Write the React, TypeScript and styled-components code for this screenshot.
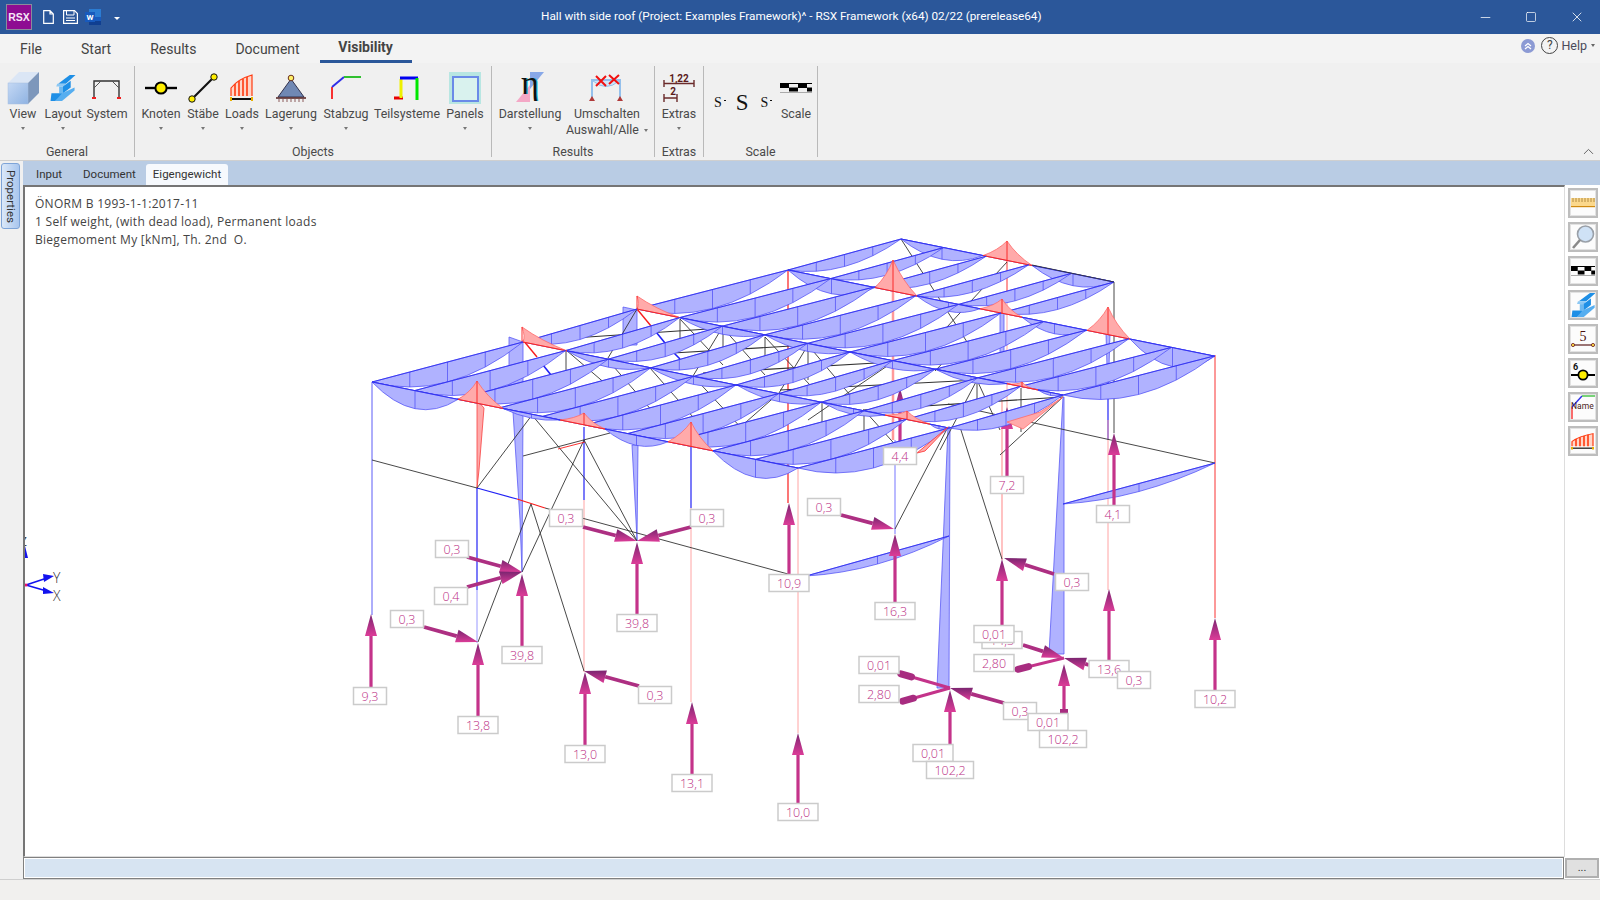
import React from "react";
import styled, { createGlobalStyle } from "styled-components";
import { FiMinus, FiSquare, FiX, FiChevronUp } from "react-icons/fi";

const UI_FONT = `Roboto, "Open Sans", "Liberation Sans", sans-serif`;
const CHART_FONT = `"Open Sans", "Noto Sans", "Liberation Sans", sans-serif`;

const GlobalStyle = createGlobalStyle`
  html, body { margin: 0; padding: 0; background: #f1f0ee; }
  body { font-family: ${UI_FONT}; color: #444; overflow: hidden; }
`;

/* ---------- geometry of the structure, in page pixels ---------- */

interface Pt {
  x: number;
  y: number;
}

const rows: Pt[] = [
  { x: 372, y: 382 },
  { x: 523, y: 342 },
  { x: 637, y: 309 },
  { x: 788, y: 270 },
  { x: 901, y: 239 },
];
const STEP_X = 42.6;
const STEP_Y = 8.6;
const node = (r: number, u: number): Pt => ({ x: rows[r].x + STEP_X * u, y: rows[r].y + STEP_Y * u });
const chordY = (r: number, x: number) => rows[r].y + ((x - rows[r].x) * STEP_Y) / STEP_X;

type Sag = [number, number, number];
type Hog = [number, number, number, number];

const frames: { row: number; end: number; sags: Sag[]; hogs: Hog[] }[] = [
  {
    row: 4,
    end: 1114,
    sags: [[901, 983, 12], [1032, 1114, 12]],
    hogs: [[983, 1032, 1007, 241]],
  },
  {
    row: 3,
    end: 1215,
    sags: [[788, 875, 15], [917, 980, 9], [1022, 1087, 10], [1130, 1215, 19]],
    hogs: [[875, 917, 893, 260], [980, 1022, 1002, 299], [1087, 1130, 1108, 307]],
  },
  {
    row: 2,
    end: 1063,
    sags: [[680, 765, 8], [765, 850, 8], [850, 935, 8], [935, 1007, 6], [1038, 1063, 3]],
    hogs: [[637, 680, 637, 296], [1007, 1038, 1022, 382]],
  },
  {
    row: 1,
    end: 948,
    sags: [[567, 650, 8], [650, 737, 8], [737, 822, 8], [822, 885, 6], [930, 948, 3]],
    hogs: [[523, 567, 522, 327], [885, 930, 907, 411]],
  },
  {
    row: 0,
    end: 798,
    sags: [[372, 458, 18], [503, 560, 4], [605, 668, 10], [713, 798, 18]],
    hogs: [[458, 503, 477, 381], [560, 605, 584, 413], [668, 713, 691, 422]],
  },
];

const spans: { from: number; to: number; count: number; depth: number }[] = [
  { from: 3, to: 4, count: 6, depth: 12 },
  { from: 2, to: 3, count: 11, depth: 19 },
  { from: 1, to: 2, count: 11, depth: 14 },
  { from: 0, to: 1, count: 11, depth: 20 },
];

// [x1, y1, x2, y2, colour, width]
type Seg = [number, number, number, number, string, number?];
const BLUE = "#2222f5";
const PALE = "#8c8cff";
const RED = "#f81c1c";
const PINK = "#ff9a9a";
const INK = "#333";

const columns: Seg[] = [
  [372, 382, 372, 615, "#4a4af5"],
  [477, 488, 477, 590, BLUE, 1.2],
  [477, 590, 477, 643, PALE],
  [584, 427, 584, 500, BLUE, 1.2],
  [584, 500, 584, 672, PINK],
  [691, 447, 691, 508, BLUE, 1.2],
  [691, 508, 691, 702, PINK],
  [788, 270, 788, 503, RED, 1.2],
  [798, 468, 798, 733, PINK],
  [893, 262, 893, 440, PINK, 2.5],
  [895, 440, 895, 534, PALE, 1.2],
  [1007, 243, 1007, 300, RED],
  [1007, 300, 1007, 480, PINK],
  [1002, 313, 1002, 360, BLUE, 1.4],
  [1002, 400, 1002, 560, PINK, 1.2],
  [1108, 333, 1108, 440, BLUE, 1.2],
  [1108, 420, 1108, 590, PINK],
  [1114, 282, 1114, 433, INK],
  [1215, 355, 1215, 618, RED],
];

const braces: Seg[] = [
  [372, 460, 477, 488, INK],
  [477, 488, 517, 499, BLUE, 1.2],
  [517, 499, 545, 508, RED, 1.2],
  [545, 508, 788, 574, INK],
  [948, 404, 1215, 463, INK],
  [477, 488, 532, 415, INK],
  [522, 572, 584, 440, INK],
  [532, 415, 637, 541, INK],
  [523, 456, 610, 433, INK],
  [558, 449, 585, 442, RED],
  [584, 440, 637, 541, INK],
  [531, 504, 584, 671, INK],
  [531, 504, 478, 642, INK],
  [895, 529, 948, 427, INK],
  [960, 427, 1002, 559, INK],
  // under the roof
  [543, 340, 723, 328, INK, 1.1],
  [673, 353, 808, 345, INK, 1.1],
  [703, 373, 893, 362, INK, 1.1],
  [780, 390, 978, 380, INK, 1.1],
  [863, 410, 1063, 397, INK, 1.1],
  [566, 350, 607, 385, INK],
  [680, 319, 723, 365, INK],
  [723, 328, 765, 375, INK],
  [765, 337, 810, 385, INK],
  [607, 359, 660, 420, INK],
  [650, 368, 700, 425, INK],
  [693, 376, 745, 432, INK],
  [808, 345, 850, 395, INK],
  [637, 309, 608, 358, INK],
  [693, 376, 722, 328, INK],
  [779, 393, 808, 345, INK],
  [737, 430, 779, 393, INK],
  [808, 420, 893, 362, INK],
  [780, 450, 864, 410, INK],
  [864, 410, 900, 450, INK],
  [901, 239, 985, 370, INK],
  [1007, 262, 935, 340, INK],
  [935, 371, 960, 345, INK],
  [1063, 397, 1000, 455, INK],
  [1021, 388, 1021, 432, INK],
  [977, 380, 1000, 430, INK],
  [977, 380, 940, 450, INK],
  [566, 350, 566, 372, INK],
  [680, 319, 680, 342, INK],
  [723, 328, 723, 350, INK],
  [765, 337, 765, 360, INK],
  [808, 345, 808, 380, INK],
  [822, 402, 822, 430, INK],
  [864, 410, 864, 435, INK],
  [977, 380, 977, 400, INK],
  // short blue struts seen through the gaps
  [543, 365, 551, 375, BLUE, 1.6],
  [656, 332, 665, 343, BLUE, 1.6],
  [673, 352, 680, 359, BLUE, 1.6],
  [523, 340, 537, 357, RED, 1.4],
  [637, 309, 651, 326, RED, 1.4],
];

// wedges of the column moment diagram
const wedges: string[] = [
  "513,412 523,412 522,572 520,520",
  "632,445 638,445 637,541 636,520",
  "948,427 950,427 949,688 937,688",
  "1063,397 1064,397 1064,654 1049,654",
  "509,337 523,342 523,400 509,400",
  "623,307 637,310 637,345 623,345",
  "1106,333 1110,333 1108,400",
  "1000,310 1004,310 1004,360 1000,360",
];

// lower beams of the side roof
const lowerBeams: [Pt, Pt, number][] = [
  [{ x: 806, y: 576 }, { x: 949, y: 536 }, 8],
  [{ x: 1063, y: 504 }, { x: 1215, y: 463 }, 8],
];

// [tail x, tail y, tip x, tip y]
type Arrow = [number, number, number, number];
const hiddenArrows: Arrow[] = [
  [900, 445, 900, 388],
  [1007, 476, 1007, 407],
];
const arrows: Arrow[] = [
  [371, 687, 371, 614],
  [478, 716, 478, 643],
  [522, 646, 522, 574],
  [637, 615, 637, 542],
  [585, 745, 585, 672],
  [692, 774, 692, 702],
  [798, 803, 798, 733],
  [789, 574, 789, 503],
  [895, 603, 895, 534],
  [1114, 505, 1114, 433],
  [1002, 626, 1002, 559],
  [1109, 661, 1109, 589],
  [1215, 690, 1215, 618],
  [950, 745, 950, 690],
  [1064, 710, 1064, 664],
  [424, 627, 478, 642],
  [467, 557, 522, 572],
  [467, 587, 522, 572],
  [583, 527, 637, 541],
  [691, 527, 637, 541],
  [639, 686, 584, 671],
  [841, 515, 894, 529],
  [1054, 574, 1004, 558],
  [1004, 703, 950, 688],
  [1023, 645, 1064, 658],
  [1089, 665, 1064, 658],
];
// short fat heads of the small reactions, [from x, from y, to x, to y]
const stubs: Arrow[] = [
  [950, 688, 898, 673],
  [950, 688, 900, 702],
  [1064, 658, 1015, 670],
];

const labels: [string, number, number][] = [
  ["9,3", 370, 696],
  ["13,8", 478, 725],
  ["39,8", 522, 655],
  ["0,3", 407, 619],
  ["0,3", 452, 549],
  ["0,4", 451, 596],
  ["0,3", 566, 518],
  ["0,3", 707, 518],
  ["39,8", 637, 623],
  ["0,3", 655, 695],
  ["13,0", 585, 754],
  ["13,1", 692, 783],
  ["10,0", 798, 812],
  ["10,9", 789, 583],
  ["0,3", 824, 507],
  ["16,3", 895, 611],
  ["4,4", 900, 456],
  ["7,2", 1007, 485],
  ["4,1", 1113, 514],
  ["0,3", 1072, 582],
  ["10,2", 1215, 699],
  ["14,3", 1002, 640],
  ["0,01", 994, 634],
  ["2,80", 994, 663],
  ["13,6", 1109, 669],
  ["0,3", 1134, 680],
  ["0,01", 879, 665],
  ["2,80", 879, 694],
  ["0,3", 1020, 711],
  ["0,01", 1048, 722],
  ["102,2", 1063, 739],
  ["0,01", 933, 753],
  ["102,2", 950, 770],
];

/* ---------- drawing helpers ---------- */

const LENS_FILL = "#b0b2ff";
const LENS_LINE = "#4848f5";

const Lens = ({ a, b, depth, ticks = 3 }: { a: Pt; b: Pt; depth: number; ticks?: number }) => {
  const cx = (a.x + b.x) / 2;
  const cy = (a.y + b.y) / 2 + depth * 2;
  const marks = Array.from({ length: ticks }, (_, i) => (i + 1) / (ticks + 1));
  return (
    <g>
      <path d={`M${a.x} ${a.y} Q${cx} ${cy} ${b.x} ${b.y} Z`} fill={LENS_FILL} stroke={LENS_LINE} strokeWidth={0.7} />
      {marks.map((t) => {
        const x = a.x + (b.x - a.x) * t;
        const y = a.y + (b.y - a.y) * t;
        return <line key={t} x1={x} y1={y} x2={x} y2={y + 4 * depth * t * (1 - t)} stroke={LENS_LINE} strokeWidth={0.7} />;
      })}
      <line x1={a.x} y1={a.y} x2={b.x} y2={b.y} stroke="#2a2af0" strokeWidth={0.8} />
    </g>
  );
};

const Frame = ({ row, end, sags, hogs }: (typeof frames)[number]) => (
  <g>
    <line x1={rows[row].x} y1={rows[row].y} x2={end} y2={chordY(row, end)} stroke="#1c1cee" strokeWidth={0.9} />
    {sags.map(([x1, x2, depth]) => (
      <Lens key={x1} a={{ x: x1, y: chordY(row, x1) }} b={{ x: x2, y: chordY(row, x2) }} depth={depth} ticks={1} />
    ))}
    {hogs.map(([x1, x2, ax, ay]) => {
      const y1 = chordY(row, x1);
      const y2 = chordY(row, x2);
      const c1x = (x1 + ax) / 2 + 3;
      const c1y = (y1 + ay) / 2 + 2;
      const c2x = (x2 + ax) / 2 - 3;
      const c2y = (y2 + ay) / 2 + 2;
      return (
        <g key={x1}>
          <path
            d={`M${x1} ${y1} Q${c1x} ${c1y} ${ax} ${ay} Q${c2x} ${c2y} ${x2} ${y2} Z`}
            fill="#ffaaaa"
            stroke="#ff6a6a"
            strokeWidth={0.8}
          />
          <line x1={ax} y1={ay} x2={ax} y2={chordY(row, ax)} stroke={RED} strokeWidth={0.9} />
          <line x1={x1} y1={y1} x2={x2} y2={y2} stroke={RED} strokeWidth={0.9} />
        </g>
      );
    })}
  </g>
);

const Arrowhead = ({ a }: { a: Arrow }) => {
  const [x1, y1, x2, y2] = a;
  const len = Math.hypot(x2 - x1, y2 - y1);
  const ux = (x2 - x1) / len;
  const uy = (y2 - y1) / len;
  const hx = x2 - ux * 22;
  const hy = y2 - uy * 22;
  const slanted = x1 !== x2;
  const wx = -uy * (slanted ? 6.5 : 6);
  const wy = ux * (slanted ? 6.5 : 6);
  return (
    <g>
      <line
        x1={x1}
        y1={y1}
        x2={hx}
        y2={hy}
        stroke={slanted ? "#ad2f82" : "#c4338a"}
        strokeWidth={slanted ? 3.8 : 3.2}
      />
      <polygon points={`${x2},${y2} ${hx + wx},${hy + wy} ${hx - wx},${hy - wy}`} fill="url(#arrowShade)" />
    </g>
  );
};

const Stub = ({ a }: { a: Arrow }) => {
  const [x1, y1, x2, y2] = a;
  const len = Math.hypot(x2 - x1, y2 - y1);
  const ux = (x2 - x1) / len;
  const uy = (y2 - y1) / len;
  return (
    <g>
      <line x1={x1} y1={y1} x2={x2} y2={y2} stroke="#c4338a" strokeWidth={3} />
      <line
        x1={x2 - ux * 14}
        y1={y2 - uy * 14}
        x2={x2 - ux * 3}
        y2={y2 - uy * 3}
        stroke="#a82c80"
        strokeWidth={7}
        strokeLinecap="round"
      />
    </g>
  );
};

const Segs = ({ items }: { items: Seg[] }) => (
  <>
    {items.map(([x1, y1, x2, y2, color, w], i) => (
      <line key={i} x1={x1} y1={y1} x2={x2} y2={y2} stroke={color} strokeWidth={w ?? 0.9} />
    ))}
  </>
);

const ValueLabel = ({ text, x, y }: { text: string; x: number; y: number }) => {
  const w = 12 + text.length * 7;
  return (
    <g>
      <rect x={x - w / 2} y={y - 8.5} width={w} height={17} fill="#fff" stroke="#cbcbcb" strokeWidth={1.5} />
      <LabelText x={x} y={y + 4.5}>
        {text}
      </LabelText>
    </g>
  );
};

const Structure = () => (
  <CanvasSvg viewBox="25 187 1540 670">
    <defs>
      <linearGradient id="arrowShade" x1="0" y1="0" x2="0" y2="1">
        <stop offset="0" stopColor="#7a2570" />
        <stop offset="1" stopColor="#dc3c98" />
      </linearGradient>
    </defs>

    {/* axis cross in the corner */}
    <g>
      <text x="20" y="546" fontSize="12" fill="#444" fontFamily={CHART_FONT}>Z</text>
      <polygon points="25,546 28,558 25,558" fill="#1212ee" />
      <line x1="26" y1="585" x2="50" y2="577" stroke="#1212ee" strokeWidth="1.4" />
      <line x1="26" y1="585" x2="50" y2="592" stroke="#1212ee" strokeWidth="1.4" />
      <polygon points="54,576 43,574 44,582" fill="#1212ee" />
      <polygon points="54,593 43,587 43,594" fill="#1212ee" />
      <circle cx="26" cy="585" r="1.6" fill="#e8106c" />
      <AxisText x="53" y="583">Y</AxisText>
      <AxisText x="53" y="601">X</AxisText>
    </g>

    <Segs items={columns} />
    {wedges.map((points) => (
      <polygon key={points} points={points} fill={LENS_FILL} stroke="#5a5af5" strokeWidth={0.8} />
    ))}
    <polygon points="477,400 484,408 479,470 477,488" fill="#ffaaaa" stroke="#f84040" strokeWidth="0.8" />
    <Segs items={braces} />
    {lowerBeams.map(([a, b, depth]) => (
      <Lens key={a.x} a={a} b={b} depth={depth} ticks={1} />
    ))}
    {hiddenArrows.map((a) => (
      <Arrowhead key={a[3]} a={a} />
    ))}

    {spans.map(({ from, to, count, depth }) => (
      <g key={from}>
        {from === 3 && <Frame {...frames[0]} />}
        {Array.from({ length: count }, (_, u) => (
          <Lens key={u} a={node(from, u)} b={node(to, u)} depth={depth} />
        ))}
        <Frame {...frames.find((f) => f.row === from)!} />
      </g>
    ))}
    <line x1="1032" y1="265" x2="1114" y2="282" stroke={INK} strokeWidth="0.9" />
    <polygon points="1007,422 1023,429 1063,397 1040,412" fill="#ffaaaa" stroke="#ff6a6a" strokeWidth="0.8" />
    <polygon points="917,453 925,451 948,427" fill="#ffaaaa" stroke="#ff4040" strokeWidth="0.9" />

    {arrows.map((a, i) => (
      <Arrowhead key={i} a={a} />
    ))}
    {stubs.map((a) => (
      <Stub key={a[2]} a={a} />
    ))}
    <rect x="1060" y="709" width="8" height="5" fill="#a82c80" />
    {labels.map(([text, x, y], i) => (
      <ValueLabel key={i} text={text} x={x} y={y} />
    ))}
  </CanvasSvg>
);

/* ---------- icons ---------- */

const ViewIcon = () => (
  <svg width="33" height="34" viewBox="0 0 33 34">
    <defs>
      <linearGradient id="boxFront" x1="0" y1="0" x2="1" y2="1">
        <stop offset="0" stopColor="#c4d8f4" />
        <stop offset="1" stopColor="#8fb3e2" />
      </linearGradient>
    </defs>
    <polygon points="1,12 12,1 32,1 21,12" fill="#dbe6f5" />
    <polygon points="21,12 32,1 32,22 21,33" fill="#7d97bb" />
    <rect x="1" y="12" width="20" height="21" fill="url(#boxFront)" stroke="#a8bfdf" strokeWidth="0.5" />
  </svg>
);

const BeamIcon = ({ size = 26 }: { size?: number }) => (
  <svg width={size} height={size} viewBox="0 0 26 27">
    <polygon points="8,9 20,0 26,0 16,9" fill="#1e8fe6" />
    <polygon points="7,9 16,9 14,12 6,12" fill="#8cc8f4" />
    <polygon points="9,12 13,12 13,19 9,19" fill="#6cb8f0" />
    <polygon points="13,12 21,6 21,13 13,19" fill="#1e8fe6" />
    <polygon points="1,19 12,19 12,21 5,27 0,27" fill="#1e8fe6" />
    <polygon points="12,19 25,13 25,16 12,27 5,27" fill="#56aef0" />
  </svg>
);

const SystemIcon = () => (
  <svg width="30" height="22" viewBox="0 0 30 22">
    <path d="M2 20 V4 H27 V20" fill="none" stroke="#333" strokeWidth="1.4" />
    <path d="M2 11 L9 4 M27 11 L20 4" fill="none" stroke="#555" strokeWidth="1" />
    <path d="M0 21 H4 M25 21 H29" stroke="#f02020" strokeWidth="2" />
  </svg>
);

const NodeIcon = () => (
  <svg width="32" height="14" viewBox="0 0 32 14">
    <line x1="0" y1="7" x2="32" y2="7" stroke="#000" strokeWidth="2.4" />
    <circle cx="16" cy="7" r="5.6" fill="#ffee00" stroke="#000" strokeWidth="2" />
  </svg>
);

const MemberIcon = () => (
  <svg width="32" height="32" viewBox="0 0 32 32">
    <line x1="5" y1="27" x2="27" y2="5" stroke="#111" strokeWidth="2.2" />
    <circle cx="5" cy="27" r="3.2" fill="#ffee00" stroke="#111" strokeWidth="1" />
    <circle cx="27" cy="5" r="3.2" fill="#ffee00" stroke="#111" strokeWidth="1" />
  </svg>
);

const LoadIcon = ({ width = 24, height = 28 }: { width?: number; height?: number }) => (
  <svg width={width} height={height} viewBox="0 0 24 28" preserveAspectRatio="none">
    <path d="M1 22 V14 Q8 5 22 1 V22" fill="#ffd6c8" stroke="#ff3a10" strokeWidth="1.2" />
    <path d="M5 22 V10 M9 22 V7 M13 22 V5 M17 22 V3" stroke="#ff3a10" strokeWidth="1.6" />
    <line x1="0" y1="25" x2="23" y2="25" stroke="#111" strokeWidth="2" />
    <path d="M1 23 V27 M22 23 V27" stroke="#e8b000" strokeWidth="2" />
  </svg>
);

const SupportIcon = () => (
  <svg width="30" height="28" viewBox="0 0 30 28">
    <polygon points="15,5 28,23 2,23" fill="#7088b4" stroke="#33334e" strokeWidth="1" />
    <circle cx="15" cy="4" r="2.8" fill="#ffee66" stroke="#6a3020" strokeWidth="1" />
    <line x1="0" y1="24" x2="30" y2="24" stroke="#5a2a2a" strokeWidth="1.6" />
    <path d="M3 25 V28 M7 25 V28 M11 25 V28 M15 25 V28 M19 25 V28 M23 25 V28 M27 25 V28" stroke="#8a5a5a" strokeWidth="1" />
  </svg>
);

const PolylineIcon = () => (
  <svg width="32" height="26" viewBox="0 0 32 26">
    <path d="M2 24 V12" stroke="#f83030" strokeWidth="2" fill="none" />
    <path d="M2 12 L14 2" stroke="#3030e8" strokeWidth="2" fill="none" />
    <path d="M14 2 H31" stroke="#30c030" strokeWidth="2" fill="none" />
  </svg>
);

const SubsystemIcon = () => (
  <svg width="26" height="24" viewBox="0 0 26 24">
    <path d="M0 22 H9" stroke="#e80000" strokeWidth="3" />
    <path d="M7 22 V3" stroke="#eef000" strokeWidth="3" />
    <path d="M6 2 H24" stroke="#0000f0" strokeWidth="3" />
    <path d="M23 2 V24" stroke="#00e800" strokeWidth="3" />
  </svg>
);

const PanelIcon = () => (
  <svg width="32" height="32" viewBox="0 0 32 32">
    <rect width="32" height="32" fill="#b8e6e2" />
    <rect x="4" y="5" width="25" height="24" fill="#d9f2ee" stroke="#6a8ae8" strokeWidth="2" />
  </svg>
);

const DisplayIcon = () => (
  <svg width="30" height="32" viewBox="0 0 30 32" overflow="visible">
    <polygon points="1,30 15,13 15,30" fill="#f4a8c6" />
    <polygon points="15,0 29,0 15,17" fill="#88a8e8" />
    <text x="16" y="22" textAnchor="middle" fontSize="34" fontFamily="Liberation Serif, serif" fill="#20b8c0">η</text>
    <text x="15" y="22" textAnchor="middle" fontSize="34" fontFamily="Liberation Serif, serif" fill="#111">η</text>
  </svg>
);

const ToggleIcon = () => (
  <svg width="34" height="28" viewBox="0 0 34 28" overflow="visible">
    <path d="M2 26 V6 H30 V26" fill="none" stroke="#94c0ec" strokeWidth="2" />
    <path d="M3 7 Q16 18 29 7" fill="#d0e4f8" stroke="#94c0ec" strokeWidth="1" />
    <polygon points="2,22 5,27 -1,27" fill="#b03a3a" />
    <polygon points="30,22 33,27 27,27" fill="#b03a3a" />
    <path d="M6 2 L16 12 M16 2 L6 12 M19 1 L29 10 M29 1 L19 10" stroke="#f01010" strokeWidth="2" />
  </svg>
);

const ExtrasIcon = () => (
  <svg width="32" height="30" viewBox="0 0 32 30" overflow="visible">
    <IconText x="16" y="9" fontSize="10" fontWeight="700">1,22</IconText>
    <path d="M1 10.5 H31 M1 7 V14 M31 7 V14" stroke="#6a2a2a" strokeWidth="1.4" fill="none" />
    <IconText x="10" y="22" fontSize="10" fontWeight="700">2</IconText>
    <path d="M1 25 H14 M1 21 V29 M14 21 V29" stroke="#6a2a2a" strokeWidth="1.4" fill="none" />
  </svg>
);

const CheckerIcon = ({ width = 32 }: { width?: number }) => (
  <svg width={width} height="10" viewBox="0 0 32 10" preserveAspectRatio="none">
    <rect width="32" height="1" fill="#000" />
    <rect x="0" y="1" width="9" height="4" fill="#000" />
    <rect x="18" y="1" width="9" height="4" fill="#000" />
    <rect x="9" y="4.5" width="9" height="4" fill="#000" />
    <rect x="27" y="4.5" width="5" height="4" fill="#000" />
    <rect y="9" width="32" height="1" fill="#aaa" />
  </svg>
);

const RulerIcon = () => (
  <svg width="24" height="10" viewBox="0 0 24 10">
    <rect width="24" height="8" fill="#fbd88c" />
    <path d="M2 0 V4 M5 0 V4 M8 0 V4 M11 0 V4 M14 0 V4 M17 0 V4 M20 0 V4 M23 0 V4" stroke="#a07a30" strokeWidth="0.8" />
    <rect y="8" width="24" height="1.2" fill="#d08a10" />
  </svg>
);

const MagnifierIcon = () => (
  <svg width="24" height="24" viewBox="0 0 24 24">
    <circle cx="14.5" cy="9" r="8" fill="#cfe2f6" stroke="#9aa0a8" strokeWidth="1.6" />
    <line x1="9" y1="15" x2="2" y2="23" stroke="#8a8a8a" strokeWidth="2.6" />
  </svg>
);

const DimensionIcon = () => (
  <svg width="24" height="20" viewBox="0 0 24 20" overflow="visible">
    <text x="12" y="12" textAnchor="middle" fontSize="14" fontFamily="Liberation Serif, serif" fill="#4a1010">5</text>
    <line x1="2" y1="16" x2="22" y2="16" stroke="#5a1a1a" strokeWidth="1.2" />
    <circle cx="2" cy="16" r="1.6" fill="#ffdd44" stroke="#6a1a1a" strokeWidth="0.8" />
    <circle cx="22" cy="16" r="1.6" fill="#ffdd44" stroke="#6a1a1a" strokeWidth="0.8" />
  </svg>
);

const NodeNumberIcon = () => (
  <svg width="24" height="22" viewBox="0 0 24 22">
    <text x="2" y="8" fontSize="9" fontWeight="700" fontFamily={UI_FONT} fill="#111">6</text>
    <line x1="0" y1="13" x2="24" y2="13" stroke="#000" strokeWidth="2" />
    <circle cx="12" cy="13" r="4.6" fill="#ffee00" stroke="#000" strokeWidth="1.8" />
  </svg>
);

const MemberNameIcon = () => (
  <svg width="24" height="26" viewBox="0 0 24 26" overflow="visible">
    <path d="M1 25 V13" stroke="#f83030" strokeWidth="1.4" fill="none" />
    <path d="M1 13 L11 2" stroke="#3030e8" strokeWidth="1.4" fill="none" />
    <path d="M11 2 H24" stroke="#40c040" strokeWidth="1.4" fill="none" />
    <text x="0" y="15" fontSize="8.5" fontFamily={UI_FONT} fill="#4a1a1a">Name</text>
  </svg>
);

const DocIcon = () => (
  <svg width="11" height="14" viewBox="0 0 11 14">
    <path d="M.7.7 H7 L10.3 4 V13.3 H.7 Z M7 .7 V4 H10.3" fill="none" stroke="#fff" strokeWidth="1.2" />
  </svg>
);

const SaveIcon = () => (
  <svg width="15" height="14" viewBox="0 0 15 14">
    <path d="M.6.6 H11.5 L14.4 3.5 V13.4 H.6 Z" fill="none" stroke="#fff" strokeWidth="1.2" />
    <path d="M3.5.6 V5 H11 V.6 M3 8 H12 M3 10.5 H12" fill="none" stroke="#fff" strokeWidth="1" />
  </svg>
);

const WordIcon = () => (
  <svg width="16" height="16" viewBox="0 0 16 16">
    <rect x="4" y="0" width="12" height="16" fill="#2b7cd3" />
    <rect x="4" y="8" width="12" height="4" fill="#185abd" />
    <rect x="4" y="12" width="12" height="4" fill="#103f91" />
    <rect x="0" y="3" width="10" height="10" fill="#185abd" />
    <text x="5" y="11" textAnchor="middle" fontSize="8" fontWeight="700" fontFamily={UI_FONT} fill="#fff">W</text>
  </svg>
);

/* ---------- ribbon content ---------- */

interface ToolDef {
  label: string;
  width: number;
  caret?: boolean;
  icon: React.ReactNode;
}

const generalTools: ToolDef[] = [
  { label: "View", width: 40, caret: true, icon: <ViewIcon /> },
  { label: "Layout", width: 40, caret: true, icon: <BeamIcon /> },
  { label: "System", width: 48, icon: <SystemIcon /> },
];
const objectTools: ToolDef[] = [
  { label: "Knoten", width: 40, caret: true, icon: <NodeIcon /> },
  { label: "Stäbe", width: 44, caret: true, icon: <MemberIcon /> },
  { label: "Loads", width: 34, caret: true, icon: <LoadIcon /> },
  { label: "Lagerung", width: 64, caret: true, icon: <SupportIcon /> },
  { label: "Stabzug", width: 46, caret: true, icon: <PolylineIcon /> },
  { label: "Teilsysteme", width: 76, icon: <SubsystemIcon /> },
  { label: "Panels", width: 40, caret: true, icon: <PanelIcon /> },
];

const sideTools: React.ReactNode[] = [
  <RulerIcon />,
  <MagnifierIcon />,
  <CheckerIcon width={24} />,
  <BeamIcon size={25} />,
  <DimensionIcon />,
  <NodeNumberIcon />,
  <MemberNameIcon />,
  <LoadIcon width={24} height={17} />,
];

const Tool = ({ label, width, caret, icon }: ToolDef) => (
  <ToolButton $width={width}>
    <ToolIcon>{icon}</ToolIcon>
    <ToolLabel>{label}</ToolLabel>
    {caret && <Caret />}
  </ToolButton>
);

const App = () => (
  <Page>
    <GlobalStyle />
    <TitleBar>
      <QuickAccess>
        <Logo>RSX</Logo>
        <QuickIcon $left={11}><DocIcon /></QuickIcon>
        <QuickIcon $left={9}><SaveIcon /></QuickIcon>
        <QuickIcon $left={7}><WordIcon /></QuickIcon>
        <QuickCaret />
      </QuickAccess>
      <WindowTitle>Hall with side roof (Project: Examples Framework)^ - RSX Framework (x64) 02/22 (prerelease64)</WindowTitle>
      <WindowControls>
        <WindowButton><FiMinus size={15} strokeWidth={1.2} /></WindowButton>
        <WindowButton><FiSquare size={12} strokeWidth={1.4} /></WindowButton>
        <WindowButton><FiX size={16} strokeWidth={1.2} /></WindowButton>
      </WindowControls>
    </TitleBar>

    <MenuRow>
      <MenuItem $left={20}>File</MenuItem>
      <MenuItem $left={39}>Start</MenuItem>
      <MenuItem $left={39}>Results</MenuItem>
      <MenuItem $left={39}>Document</MenuItem>
      <ActiveMenu>Visibility</ActiveMenu>
      <HelpArea>
        <HelpBadge>
          <svg width="14" height="14" viewBox="0 0 14 14">
            <path d="M4 7 L7 4.5 L10 7 M4 10 L7 7.5 L10 10" fill="none" stroke="#fff" strokeWidth="1.3" />
          </svg>
        </HelpBadge>
        <HelpCircle>?</HelpCircle>
        <HelpText>Help</HelpText>
        <HelpCaret />
      </HelpArea>
    </MenuRow>

    <Ribbon>
      <Group $width={135}>
        <Tools $pad={3}>{generalTools.map((t) => <Tool key={t.label} {...t} />)}</Tools>
        <GroupName>General</GroupName>
      </Group>
      <Group $width={357}>
        <Tools $pad={6}>{objectTools.map((t) => <Tool key={t.label} {...t} />)}</Tools>
        <GroupName>Objects</GroupName>
      </Group>
      <Group $width={163}>
        <Tools $pad={5}>
          <Tool label="Darstellung" width={66} caret icon={<DisplayIcon />} />
          <ToolButton $width={88}>
            <ToolIcon><ToggleIcon /></ToolIcon>
            <ToolLabel>Umschalten</ToolLabel>
            <ToolLabel>Auswahl/Alle <InlineCaret /></ToolLabel>
          </ToolButton>
        </Tools>
        <GroupName>Results</GroupName>
      </Group>
      <Group $width={49}>
        <Tools $pad={0}>
          <Tool label="Extras" width={48} caret icon={<ExtrasIcon />} />
        </Tools>
        <GroupName>Extras</GroupName>
      </Group>
      <Group $width={114}>
        <Tools $pad={10}>
          <ScaleGlyphs>
            <SmallS>S</SmallS>
            <BigS>S</BigS>
            <SmallS>S</SmallS>
          </ScaleGlyphs>
          <Tool label="Scale" width={36} icon={<CheckerIcon />} />
        </Tools>
        <GroupName>Scale</GroupName>
      </Group>
      <CollapseButton><FiChevronUp size={17} strokeWidth={1.4} /></CollapseButton>
    </Ribbon>

    <Workspace>
      <SideStrip>
        <PropertiesTab>Properties</PropertiesTab>
      </SideStrip>
      <WorkColumn>
        <DocTabs>
          <DocTab>Input</DocTab>
          <DocTab>Document</DocTab>
          <DocTab $active>Eigengewicht</DocTab>
        </DocTabs>
        <Body>
          <Canvas>
            <Structure />
            <Note>ÖNORM B 1993-1-1:2017-11</Note>
            <Note>1 Self weight, (with dead load), Permanent loads</Note>
            <Note>Biegemoment My [kNm], Th. 2nd&nbsp; O.</Note>
          </Canvas>
          <SideTools>
            {sideTools.map((icon, i) => (
              <SideButton key={i}>{icon}</SideButton>
            ))}
          </SideTools>
        </Body>
        <BottomRow>
          <InputBar />
          <MoreButton>...</MoreButton>
        </BottomRow>
      </WorkColumn>
    </Workspace>
    <StatusBar />
  </Page>
);

/* ---------- styles ---------- */

const Page = styled.div`
  width: 1600px;
  height: 900px;
  display: flex;
  flex-direction: column;
  background: #f0f0f0;
  overflow: hidden;
`;

const TitleBar = styled.header`
  height: 34px;
  flex: none;
  display: flex;
  align-items: center;
  position: relative;
  background: #2b579a;
  color: #fff;
`;

const QuickAccess = styled.div`
  display: flex;
  align-items: center;
  padding-left: 6px;
`;

const Logo = styled.div`
  width: 24px;
  height: 24px;
  display: flex;
  align-items: center;
  justify-content: center;
  background: #8e0c92;
  border: 1px solid #8b8b9c;
  font: 700 10.5px "Liberation Sans", sans-serif;
  color: #f5e6f6;
`;

const QuickIcon = styled.span<{ $left: number }>`
  display: flex;
  margin-left: ${(p) => p.$left}px;
`;

const QuickCaret = styled.span`
  width: 0;
  height: 0;
  margin-left: 13px;
  margin-top: 3px;
  border-left: 3px solid transparent;
  border-right: 3px solid transparent;
  border-top: 3px solid #fff;
`;

const WindowTitle = styled.div`
  position: absolute;
  left: 541px;
  top: 0;
  line-height: 32px;
  font-size: 11.75px;
  white-space: nowrap;
`;

const WindowControls = styled.div`
  display: flex;
  margin-left: auto;
`;

const WindowButton = styled.div`
  width: 46px;
  height: 34px;
  display: flex;
  align-items: center;
  justify-content: center;
`;

const MenuRow = styled.nav`
  height: 29px;
  flex: none;
  display: flex;
  align-items: center;
  background: #f3f3f3;
`;

const MenuItem = styled.div<{ $left: number }>`
  margin-left: ${(p) => p.$left}px;
  font-size: 14px;
  color: #444;
`;

const ActiveMenu = styled.div`
  margin-left: 20px;
  width: 92px;
  height: 29px;
  box-sizing: border-box;
  text-align: center;
  line-height: 27px;
  font-size: 14px;
  font-weight: 700;
  color: #444;
  border-bottom: 3px solid #2b579a;
`;

const HelpArea = styled.div`
  margin-left: auto;
  margin-right: 5px;
  display: flex;
  align-items: center;
  gap: 6px;
  font-size: 12.5px;
  margin-top: -6px;
`;

const HelpBadge = styled.span`
  width: 14px;
  height: 14px;
  border-radius: 50%;
  background: #8c9ad4;
  display: flex;
`;

const HelpCircle = styled.span`
  width: 15px;
  height: 15px;
  border: 1px solid #444;
  border-radius: 50%;
  font-size: 12px;
  line-height: 15px;
  text-align: center;
`;

const HelpText = styled.span`
  margin-left: -3px;
  color: #4a4a5a;
`;

const HelpCaret = styled.span`
  width: 0;
  height: 0;
  margin-left: -2px;
  border-left: 2.5px solid transparent;
  border-right: 2.5px solid transparent;
  border-top: 3px solid #666;
`;

const Ribbon = styled.section`
  height: 98px;
  flex: none;
  box-sizing: border-box;
  display: flex;
  background: #f0f0f0;
  border-bottom: 1px solid #cfcfcf;
  padding: 3px 0 3px;
`;

const Group = styled.div<{ $width: number }>`
  width: ${(p) => p.$width}px;
  box-sizing: border-box;
  flex: none;
  display: flex;
  flex-direction: column;
  border-right: 1px solid #b9b9b9;
`;

const Tools = styled.div<{ $pad: number }>`
  flex: 1;
  display: flex;
  min-height: 0;
  padding-left: ${(p) => p.$pad}px;
`;

const GroupName = styled.div`
  margin-bottom: -3px;
  text-align: center;
  font-size: 12.4px;
  line-height: 16px;
  color: #4a4a4a;
`;

const ToolButton = styled.div<{ $width: number }>`
  width: ${(p) => p.$width}px;
  flex: none;
  display: flex;
  flex-direction: column;
  align-items: center;
`;

const ToolIcon = styled.div`
  height: 36px;
  flex: none;
  margin-top: 4px;
  display: flex;
  align-items: center;
  justify-content: center;
`;

const ToolLabel = styled.div`
  font-size: 12.4px;
  line-height: 16px;
  white-space: nowrap;
  color: #4a4a4a;
`;

const Caret = styled.span`
  width: 0;
  height: 0;
  margin-top: 5px;
  border-left: 2.5px solid transparent;
  border-right: 2.5px solid transparent;
  border-top: 3px solid #777;
`;

const InlineCaret = styled(Caret)`
  display: inline-block;
  margin: 0 0 2px 2px;
`;

const ScaleGlyphs = styled.div`
  width: 64px;
  flex: none;
  display: flex;
  align-items: center;
  height: 74px;
  font-family: "Liberation Serif", serif;
  color: #111;
`;

const SmallS = styled.span`
  position: relative;
  font-size: 14px;
  margin-right: 14px;

  &::after {
    content: "";
    position: absolute;
    right: -4px;
    top: 5px;
    width: 2px;
    height: 1px;
    background: #111;
  }
`;

const BigS = styled.span`
  font-size: 23px;
  margin-right: 12px;
`;

const CollapseButton = styled.div`
  margin-left: auto;
  margin-right: 3px;
  align-self: flex-end;
  display: flex;
  color: #666;
  margin-bottom: -3px;
`;

const Workspace = styled.div`
  flex: 1;
  display: flex;
  min-height: 0;
`;

const SideStrip = styled.aside`
  width: 23px;
  flex: none;
  padding: 2px 0 0 1px;
  box-sizing: border-box;
  background: #f0f0f0;
`;

const PropertiesTab = styled.div`
  width: 19px;
  height: 66px;
  box-sizing: border-box;
  border: 1px solid #7ea4d8;
  border-radius: 3px;
  background: linear-gradient(to right, #dbe8f8, #a9c6ee);
  writing-mode: vertical-rl;
  text-align: center;
  font-size: 11.5px;
  line-height: 17px;
  color: #333;
`;

const WorkColumn = styled.div`
  flex: 1;
  min-width: 0;
  display: flex;
  flex-direction: column;
`;

const DocTabs = styled.div`
  height: 24px;
  flex: none;
  display: flex;
  align-items: flex-end;
  padding-left: 2px;
  background: #b9cce4;
`;

const DocTab = styled.div<{ $active?: boolean }>`
  height: 21px;
  padding: 0 7px 0 ${(p) => (p.$active ? 7 : 11)}px;
  margin-right: ${(p) => (p.$active ? 0 : 3)}px;
  font-size: 11.5px;
  line-height: 20px;
  color: #333;
  border-radius: 3px 3px 0 0;
  background: ${(p) => (p.$active ? "#f6f9fd" : "transparent")};
`;

const Body = styled.div`
  flex: 1;
  display: flex;
  min-height: 0;
  background: #fff;
`;

const Canvas = styled.main`
  flex: 1;
  min-width: 0;
  position: relative;
  box-sizing: border-box;
  padding: 8px 0 0 10px;
  background: #fff;
  border-top: 2px solid #757575;
  border-left: 2px solid #757575;
  border-bottom: 1px solid #ddd;
  border-right: 1px solid #ddd;
`;

const CanvasSvg = styled.svg`
  position: absolute;
  left: 0;
  top: 0;
  width: 1540px;
  height: 670px;
`;

const LabelText = styled.text`
  font-family: ${CHART_FONT};
  font-weight: 300;
  font-size: 12.5px;
  fill: #bb2f85;
  text-anchor: middle;
`;

const AxisText = styled.text`
  font-family: ${CHART_FONT};
  font-weight: 300;
  font-size: 14px;
  fill: #333;
`;

const IconText = styled.text`
  font-family: ${UI_FONT};
  fill: #5a1a1a;
  text-anchor: middle;
`;

const Note = styled.div`
  position: relative;
  font-family: ${CHART_FONT};
  font-size: 12px;
  line-height: 18px;
  letter-spacing: 0.28px;
  color: #444;
`;

const SideTools = styled.div`
  width: 35px;
  flex: none;
  box-sizing: border-box;
  padding: 3px 0 0 3px;
  display: flex;
  flex-direction: column;
  gap: 4px;
  background: #fff;
`;

const SideButton = styled.div`
  width: 30px;
  height: 30px;
  box-sizing: border-box;
  display: flex;
  align-items: center;
  justify-content: center;
  background: #fcfcfc;
  border: 2px solid #bdbdbd;
  outline: 1px solid #e2e2e2;
  outline-offset: -3px;
`;

const BottomRow = styled.div`
  height: 22px;
  flex: none;
  display: flex;
  background: #fff;
`;

const InputBar = styled.div`
  flex: 1;
  box-sizing: border-box;
  background: #d7e4f2;
  border: 1px solid #808080;
  outline: 1px solid #fff;
  outline-offset: -2px;
  border-bottom-width: 2px;
`;

const MoreButton = styled.div`
  width: 30px;
  height: 16px;
  margin: 1px 1px 0 1px;
  background: #e0e0e0;
  border: 2px solid #b0b0b0;
  text-align: center;
  font-size: 11px;
  line-height: 16px;
  color: #333;
`;

const StatusBar = styled.footer`
  height: 21px;
  flex: none;
  background: #f1f0ee;
  border-top: 1px solid #cfcfcf;
  box-sizing: border-box;
`;

export default App;
